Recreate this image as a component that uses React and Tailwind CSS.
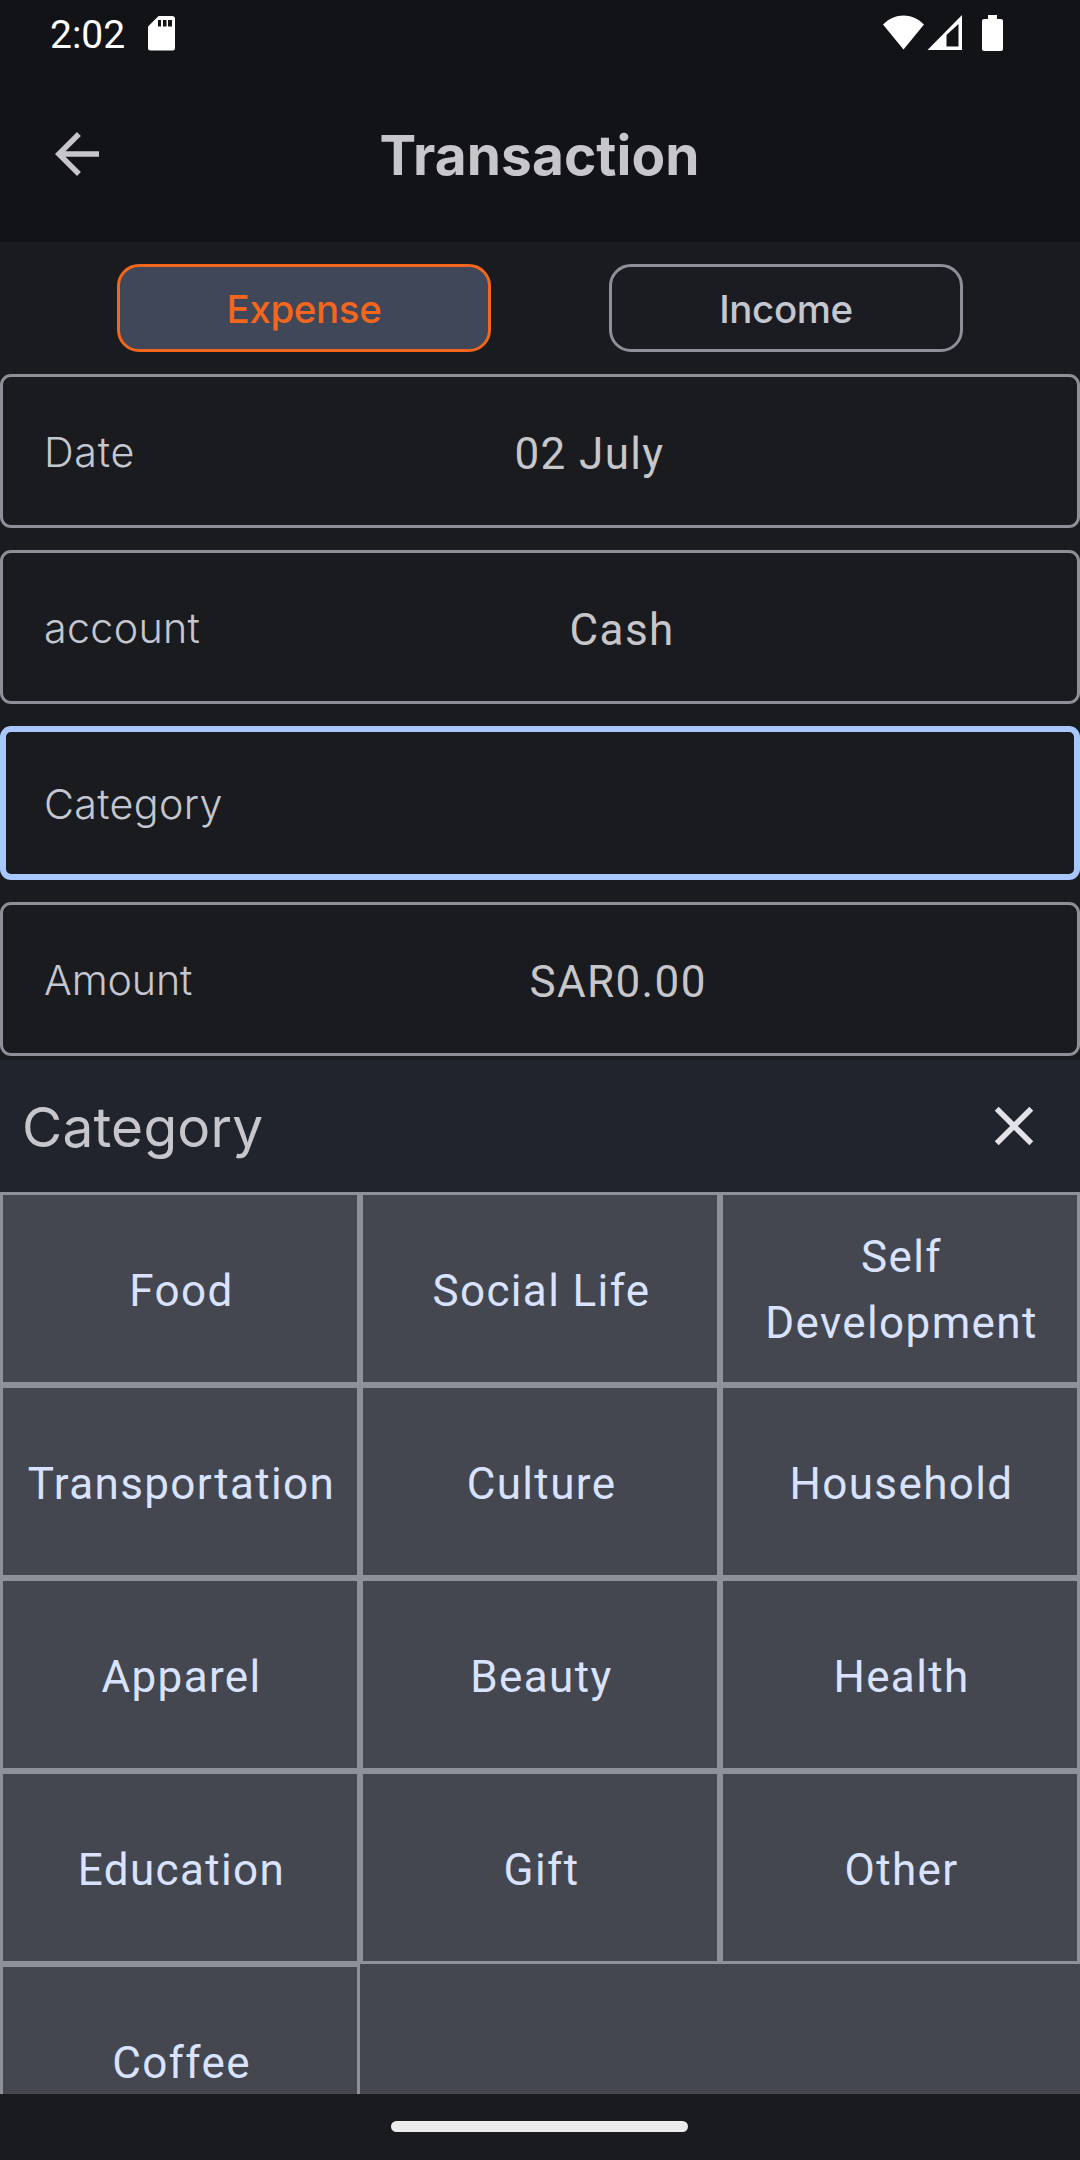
const categories = [
  'Food', 'Social Life', 'Self Development',
  'Transportation', 'Culture', 'Household',
  'Apparel', 'Beauty', 'Health',
  'Education', 'Gift', 'Other',
  'Coffee',
];

function StatusBar() {
  return (
    <div className="flex h-[66px] items-start justify-between pl-[50px] pr-[77px] pt-[14px] text-white">
      <div className="flex items-start">
        <span className="mt-px h-[40px] w-[75px] whitespace-nowrap font-[Roboto,sans-serif] text-[39px] leading-[40px]">2:02</span>
        <svg className="ml-[23px] mt-[2px] h-[35px] w-[27px]" viewBox="0 0 27 35" fill="currentColor">
          <path fillRule="evenodd" d="M10.5 0H24a3 3 0 0 1 3 3v29a2.5 2.5 0 0 1-2.500 2.500h-22A2.500 2.500 0 0 1 0 32V10.500ZM10 4v6.500h3V4Zm5 0v6.500h3.500V4Zm5 0v6.500h4V4Z" />
        </svg>
      </div>
      <svg className="mt-px h-[36px] w-[120px]" viewBox="0 0 120 36" fill="currentColor">
        <path d="M0 9.500C12 -2.500 29 -2.500 41 9.500L20.500 34.500Z" />
        <path fillRule="evenodd" d="M44.500 35L79 0V35ZM63.500 20V31.500H75.500V9Z" />
        <path d="M105 0h9v4h4a2 2 0 0 1 2 2v28a2 2 0 0 1-2 2h-17a2 2 0 0 1-2-2V6a2 2 0 0 1 2-2h4Z" />
      </svg>
    </div>
  );
}

function Header() {
  return (
    <div className="flex h-[176px] items-start pl-[44px] pr-[44px] pt-[55px]">
      <svg className="h-[66px] w-[66px] text-[#c7c6ca]" viewBox="0 0 24 24" fill="currentColor">
        <path d="M20 11H7.830l5.590-5.590L12 4l-8 8 8 8 1.410-1.410L7.830 13H20v-2z" />
      </svg>
      <h1 className="mr-[67px] mt-px flex-1 text-center font-[Inter,sans-serif] text-[55px] font-bold leading-[66px] tracking-[0.05px] text-[#c7c6ca]">Transaction</h1>
    </div>
  );
}

function Field({ label, value, focused, tracking }) {
  return (
    <div className={
      focused
        ? 'flex h-[154px] items-center rounded-[11px] border-[6px] border-[#a9c7ff] pl-[38px] pr-[38px]'
        : 'flex h-[154px] items-center rounded-[11px] border-[3px] border-[#8e9099] pl-[41px] pr-[41px]'
    }>
      <span className={`mt-[2px] font-[Inter,sans-serif] text-[41.250px] font-light leading-[60px] text-[#c4c6d0] ${tracking}`}>{label}</span>
      <span className="ml-[8px] mt-[6px] flex-1 text-center font-[Roboto,sans-serif] text-[44px] leading-[66px] tracking-[1.375px] text-[#c7c6ca]">{value}</span>
    </div>
  );
}

export default function App() {
  return (
    <div className="flex h-[2160px] w-[1080px] flex-col overflow-hidden bg-[#1a1b1f]">
      <div className="h-[242px] shrink-0 bg-[#121317]">
        <StatusBar />
        <Header />
      </div>

      <div className="flex h-[818px] shrink-0 flex-col gap-[22px] pt-[22px]">
        <div className="flex gap-[118px] pl-[117px] font-[Inter,sans-serif] text-[38.500px] font-medium tracking-[-0.4px]">
          <button className="flex h-[88px] w-[374px] items-center justify-center rounded-[22px] border-[3px] border-[#f4661b] bg-[#3f4759] pt-[3px] text-[#f4661b]">Expense</button>
          <button className="flex h-[88px] w-[354px] items-center justify-center rounded-[22px] border-[3px] border-[#8e9099] bg-[#1b1c21] pt-[3px] text-[#c4c6d0]">Income</button>
        </div>
        <Field label="Date" value="02 July" tracking="tracking-[0.7px]" />
        <Field label="account" value="Cash" tracking="tracking-[0.3px]" />
        <Field label="Category" value="" tracking="tracking-[0.3px]" focused />
        <Field label="Amount" value="SAR0.00" tracking="tracking-[-0.15px]" />
      </div>

      <div className="flex h-[132px] shrink-0 items-center justify-between bg-[#20242d] pl-[22px] pr-[33px]">
        <h2 className="mt-[2px] font-[Inter,sans-serif] text-[55px] leading-[66px] tracking-[0.2px] text-[#c7c6ca]">Category</h2>
        <svg className="h-[66px] w-[66px] text-[#e3e2e6]" viewBox="0 0 24 24" fill="currentColor">
          <path d="M19 6.410L17.590 5 12 10.590 6.410 5 5 6.410 10.590 12 5 17.590 6.410 19 12 13.410 17.590 19 19 17.590 13.410 12z" />
        </svg>
      </div>

      <div className="h-[902px] shrink-0 overflow-hidden bg-[#44474f]">
        <div className="grid auto-rows-[193px] grid-cols-3">
          {categories.map((name) => (
            <div
              key={name}
              className={`flex items-center justify-center border-[3px] border-[#8e9199] pl-[24px] pr-[21px] text-center font-[Roboto,sans-serif] text-[44px] leading-[66px] tracking-[1.375px] text-[#d9e2ff] ${name === 'Self Development' ? 'pt-[3px]' : 'pt-[5px]'}`}
            >
              {name}
            </div>
          ))}
        </div>
      </div>

      <div className="flex h-[66px] shrink-0 pl-[391px] pt-[27px]">
        <div className="h-[11px] w-[297px] rounded-full bg-[#ececec]" />
      </div>
    </div>
  );
}
